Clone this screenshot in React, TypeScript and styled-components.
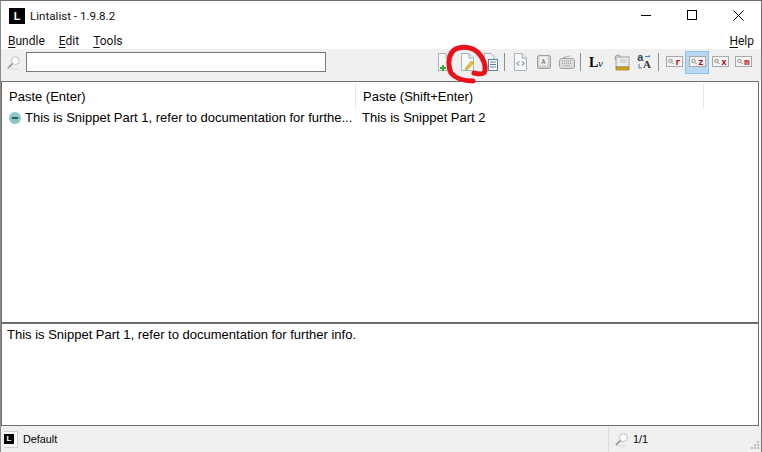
import React from "react";
import styled, { createGlobalStyle } from "styled-components";

const Global = createGlobalStyle`
  html, body { margin: 0; padding: 0; background: #fff; overflow: hidden; }
  #root { width: 762px; height: 452px; }
`;

const Windowed = styled.div`
  position: relative;
  width: 762px;
  height: 452px;
  box-sizing: border-box;
  display: flex;
  flex-direction: column;
  background: #fff;
  border-top: 1px solid #6f6f6f;
  border-left: 1px solid #8a8a8a;
  border-right: 1px solid #6f6f6f;
  font-family: "Liberation Sans", Arial, sans-serif;
  color: #000;
  overflow: hidden;
`;

const TitleBar = styled.div`
  height: 30px;
  display: flex;
  align-items: center;
  padding-left: 8px;
  flex: none;
`;
const AppLogo = styled.div`
  width: 16px;
  height: 16px;
  background: #000;
  color: #fff;
  font: bold 11px/16px "Liberation Sans", sans-serif;
  text-align: center;
  margin-right: 5px;
`;
const TitleText = styled.div`
  font: 11.6px Roboto, sans-serif;
  color: #111;
`;
const WinButtons = styled.div`
  margin-left: auto;
  display: flex;
  height: 30px;
`;
const WinButton = styled.div`
  width: 46px;
  height: 30px;
  display: flex;
  align-items: center;
  justify-content: center;
  margin-top: -1px;
`;

const MenuBar = styled.div`
  height: 18px;
  flex: none;
  display: flex;
  align-items: center;
  padding: 2px 7px 0;
  box-sizing: border-box;
  gap: 14px;
  font: 12px Roboto, sans-serif;
  color: #111;
`;
const MenuItem = styled.span<{ $right?: boolean }>`
  ${(p) => (p.$right ? "margin-left: auto;" : "")}
  u { text-underline-offset: 2px; }
`;

const Toolbar = styled.div`
  height: 32px;
  flex: none;
  background: #f0f0f0;
  display: flex;
  align-items: center;
  padding: 0 0 6px 5px;
  box-sizing: border-box;
`;
const SearchInput = styled.div`
  width: 298px;
  height: 18px;
  margin-left: 5px;
  background: #fff;
  border: 1px solid #7a7a7a;
`;
const Tools = styled.div`
  margin-left: auto;
  display: flex;
  align-items: center;
  padding-right: 6px;
`;
const ToolIcon = styled.div<{ $w?: number; $active?: boolean }>`
  width: ${(p) => p.$w ?? 23}px;
  height: 23px;
  display: flex;
  align-items: center;
  justify-content: center;
  box-sizing: border-box;
  ${(p) => (p.$active ? "background: #b8d8f2; border: 1px solid #8cc1ec;" : "")}
`;
const ToolSep = styled.div`
  width: 1px;
  height: 18px;
  background: #8f8f8f;
  margin: 0 4px 0 2px;
`;

const ListPane = styled.div`
  flex: 1;
  border: 1px solid #6e6e6e;
  border-bottom: none;
  margin-right: 2px;
  min-height: 0;
`;
const HeaderRow = styled.div`
  display: flex;
  height: 26px;
  padding-top: 2px;
  box-sizing: border-box;
  font-size: 13px;
  color: #000;
`;
const HeaderCell = styled.div<{ $w: number }>`
  width: ${(p) => p.$w}px;
  box-sizing: border-box;
  padding: 5px 0 0 7px;
  border-right: 1px solid #e5e5e5;
  white-space: nowrap;
`;
const Row = styled.div`
  display: flex;
  height: 17px;
  align-items: center;
  font-size: 13px;
  margin-top: 1px;
`;
const Cell = styled.div<{ $w: number }>`
  width: ${(p) => p.$w}px;
  box-sizing: border-box;
  padding-left: 6px;
  display: flex;
  align-items: center;
  white-space: nowrap;
`;
const StatusDot = styled.span`
  width: 12px;
  height: 12px;
  border-radius: 50%;
  background: #8cc5c3;
  margin: 0 4px 0 1px;
  display: flex;
  align-items: center;
  justify-content: center;
  flex: none;
  &::after {
    content: "";
    width: 6px;
    height: 2px;
    background: #33595c;
  }
`;

const Preview = styled.div`
  height: 104px;
  flex: none;
  box-sizing: border-box;
  margin-right: 2px;
  border: 1px solid #6e6e6e;
  border-top: 2px solid #6e6e6e;
  padding: 3px 0 0 5px;
  font-size: 13px;
  line-height: 16px;
  color: #000;
`;

const StatusBar = styled.div`
  height: 26px;
  flex: none;
  background: #f0f0f0;
  display: flex;
  align-items: center;
  font-size: 10.8px;
  color: #000;
  position: relative;
`;
const BundleIcon = styled.div`
  width: 14px;
  height: 17px;
  margin-left: 3px;
  background: #fafafa;
  border: 1px solid #d0d0d0;
  border-left: none;
  display: flex;
  align-items: center;
  box-sizing: border-box;
`;
const BundleMark = styled.div`
  width: 10px;
  height: 10px;
  background: #000;
  color: #fff;
  font: bold 8px/10px "Liberation Sans", sans-serif;
  text-align: center;
`;
const BundleName = styled.span`
  margin-left: 5px;
`;
const StatusRight = styled.div`
  margin-left: auto;
  display: flex;
  align-items: center;
  height: 100%;
  width: 153px;
  border-left: 1px solid #dcdcdc;
  box-sizing: border-box;
  padding-left: 5px;
  gap: 4px;
`;
const Grip = styled.svg`
  position: absolute;
  right: 1px;
  bottom: 2px;
`;
const RedMark = styled.svg`
  position: absolute;
  left: 441px;
  top: 41px;
  pointer-events: none;
`;

const Magnifier = ({ size = 16 }: { size?: number }) => (
  <svg width={size} height={size} viewBox="0 0 16 16" fill="none">
    <ellipse cx="8" cy="15" rx="6" ry="0.8" fill="#e0e0e0" />
    <circle cx="10" cy="6" r="4.2" fill="#fff" stroke="#b5b5b5" />
    <path d="M7 9 L2 14" stroke="#9a9a9a" strokeWidth="1.8" />
  </svg>
);

const Doc = ({ children }: { children?: React.ReactNode }) => (
  <svg width="15" height="18" viewBox="0 0 15 18">
    <path d="M1.5 .5 H9 L13.5 5 V17.5 H1.5 Z" fill="#f7f9f9" stroke="#a7b2b4" />
    <path d="M9 .5 V5 H13.5" fill="#e3e8e8" stroke="#a7b2b4" />
    {children}
  </svg>
);

const KeyTag = ({ letter, color = "#c00000" }: { letter: string; color?: string }) => (
  <svg width="17" height="12" viewBox="0 0 17 12">
    <rect x=".5" y=".5" width="16" height="10" fill="#f4f4f4" stroke="#a8a8a8" />
    <circle cx="4.5" cy="5" r="1.7" fill="none" stroke="#8a8a8a" />
    <path d="M6 6.5 L7.5 8" stroke="#8a8a8a" />
    <text x="12" y="8.5" textAnchor="middle" fontFamily="Liberation Mono" fontWeight="bold" fontSize="9" fill={color}>{letter}</text>
  </svg>
);

export default function App() {
  return (
    <Windowed>
      <Global />
      <TitleBar>
        <AppLogo>L</AppLogo>
        <TitleText>Lintalist - 1.9.8.2</TitleText>
        <WinButtons>
          <WinButton>
            <svg width="10" height="10"><path d="M0 5.5H10" stroke="#000" /></svg>
          </WinButton>
          <WinButton>
            <svg width="10" height="10"><rect x=".5" y=".5" width="9" height="9" fill="none" stroke="#000" /></svg>
          </WinButton>
          <WinButton>
            <svg width="11" height="11"><path d="M.5 .5L10.5 10.5M10.5 .5L.5 10.5" stroke="#000" /></svg>
          </WinButton>
        </WinButtons>
      </TitleBar>
      <MenuBar>
        <MenuItem><u>B</u>undle</MenuItem>
        <MenuItem><u>E</u>dit</MenuItem>
        <MenuItem><u>T</u>ools</MenuItem>
        <MenuItem $right><u>H</u>elp</MenuItem>
      </MenuBar>
      <Toolbar>
        <Magnifier size={15} />
        <SearchInput />
        <Tools>
          <ToolIcon>
            <Doc><rect x="3" y="14" width="6" height="2" fill="#36a836" /><rect x="5" y="12" width="2" height="6" fill="#36a836" /></Doc>
          </ToolIcon>
          <ToolIcon>
            <Doc><path d="M6 14.5 L11.5 8 L13.5 10 L8 16 L5.5 16.8 Z" fill="#f1c232" stroke="#a67c00" strokeWidth=".6" /></Doc>
          </ToolIcon>
          <ToolIcon>
            <svg width="15" height="18" viewBox="0 0 15 18">
              <path d="M1.5 .5 H8 L11 3.5 V14 H1.5 Z" fill="#eef2f4" stroke="#a7b2b4" />
              <rect x="5.5" y="6.5" width="9" height="11" fill="#fff" stroke="#557fa8" />
              <path d="M7 9H13M7 11.5H13M7 14H13" stroke="#557fa8" />
            </svg>
          </ToolIcon>
          <ToolSep />
          <ToolIcon>
            <Doc>
              <path d="M6 8.5 L4 10.5 L6 12.5 M9 8.5 L11 10.5 L9 12.5" fill="none" stroke="#29586d" />
            </Doc>
          </ToolIcon>
          <ToolIcon>
            <svg width="14" height="14" viewBox="0 0 14 14">
              <rect x=".5" y=".5" width="13" height="13" rx="1.5" fill="#cfcfcf" stroke="#a0a0a0" />
              <rect x="2.5" y="1.5" width="8" height="9" fill="#f2f2f2" />
              <text x="6.5" y="8.5" textAnchor="middle" fontSize="6.5" fontFamily="Liberation Mono" fill="#555">A</text>
            </svg>
          </ToolIcon>
          <ToolIcon>
            <svg width="16" height="14" viewBox="0 0 16 14">
              <path d="M4 3 C5 1 9 3 11 .5" fill="none" stroke="#a8a8a8" />
              <rect x=".5" y="3.5" width="15" height="10" rx="2.5" fill="#dedede" stroke="#a3a3a3" />
              <path d="M3 6H13M3 8.3H13M4 10.8H12" stroke="#a0a0a0" strokeDasharray="1.3 .7" />
            </svg>
          </ToolIcon>
          <ToolSep />
          <ToolIcon $w={25}>
            <svg width="20" height="16" viewBox="0 0 20 16">
              <text x="1" y="13" fontFamily="Liberation Serif" fontWeight="bold" fontSize="14" fill="#000">L</text>
              <text x="10" y="13" fontFamily="Liberation Serif" fontStyle="italic" fontSize="11" fill="#222">v</text>
            </svg>
          </ToolIcon>
          <ToolIcon>
            <svg width="17" height="17" viewBox="0 0 17 17">
              <circle cx="5" cy="4" r="3" fill="none" stroke="#a0a0a0" />
              <rect x="3" y="3" width="13" height="10" fill="#ececec" stroke="#a0a0a0" />
              <path d="M7 6H14M7 8H14" stroke="#c0c0c0" />
              <rect x="3" y="13" width="13" height="3" fill="#e0a917" stroke="#6a5200" strokeWidth=".5" />
            </svg>
          </ToolIcon>
          <ToolIcon>
            <svg width="16" height="20" viewBox="0 0 16 20">
              <text x="0" y="9" fontFamily="Liberation Mono" fontWeight="bold" fontSize="11" fill="#274b66">a</text>
              <text x="6" y="16" fontFamily="Liberation Serif" fontWeight="bold" fontSize="11" fill="#333">A</text>
              <path d="M8 4.5H13L12 3M2 12V16H5" fill="none" stroke="#3f7fd0" />
            </svg>
          </ToolIcon>
          <ToolSep />
          <ToolIcon $w={22}><KeyTag letter="r" /></ToolIcon>
          <ToolIcon $w={24} $active><KeyTag letter="z" /></ToolIcon>
          <ToolIcon $w={22}><KeyTag letter="x" /></ToolIcon>
          <ToolIcon $w={24}><KeyTag letter="m" /></ToolIcon>
        </Tools>
      </Toolbar>
      <ListPane>
        <HeaderRow>
          <HeaderCell $w={354}>Paste (Enter)</HeaderCell>
          <HeaderCell $w={348}>Paste (Shift+Enter)</HeaderCell>
        </HeaderRow>
        <Row>
          <Cell $w={354}>
            <StatusDot />
            This is Snippet Part 1, refer to documentation for furthe...
          </Cell>
          <Cell $w={348}>This is Snippet Part 2</Cell>
        </Row>
      </ListPane>
      <Preview>This is Snippet Part 1, refer to documentation for further info.</Preview>
      <StatusBar>
        <BundleIcon><BundleMark>L</BundleMark></BundleIcon>
        <BundleName>Default</BundleName>
        <StatusRight>
          <Magnifier size={15} />
          <span>1/1</span>
        </StatusRight>
        <Grip width="10" height="10" viewBox="0 0 10 10" fill="#bdbdbd">
          <rect x="7" y="1" width="2" height="2" />
          <rect x="4" y="4" width="2" height="2" />
          <rect x="7" y="4" width="2" height="2" />
          <rect x="1" y="7" width="2" height="2" />
          <rect x="4" y="7" width="2" height="2" />
          <rect x="7" y="7" width="2" height="2" />
        </Grip>
      </StatusBar>
      <RedMark width="50" height="44" viewBox="441 41 50 44" fill="none">
        <path
          d="M473 72 C477 73 483 74 484 70 C485 62 480 52 472 48 C464 45 455 46 451 51 C447 57 447 66 450 72 C455 78 462 80 472 80"
          stroke="#e8131a"
          strokeWidth="5"
          strokeLinecap="round"
          strokeLinejoin="round"
        />
      </RedMark>
    </Windowed>
  );
}
